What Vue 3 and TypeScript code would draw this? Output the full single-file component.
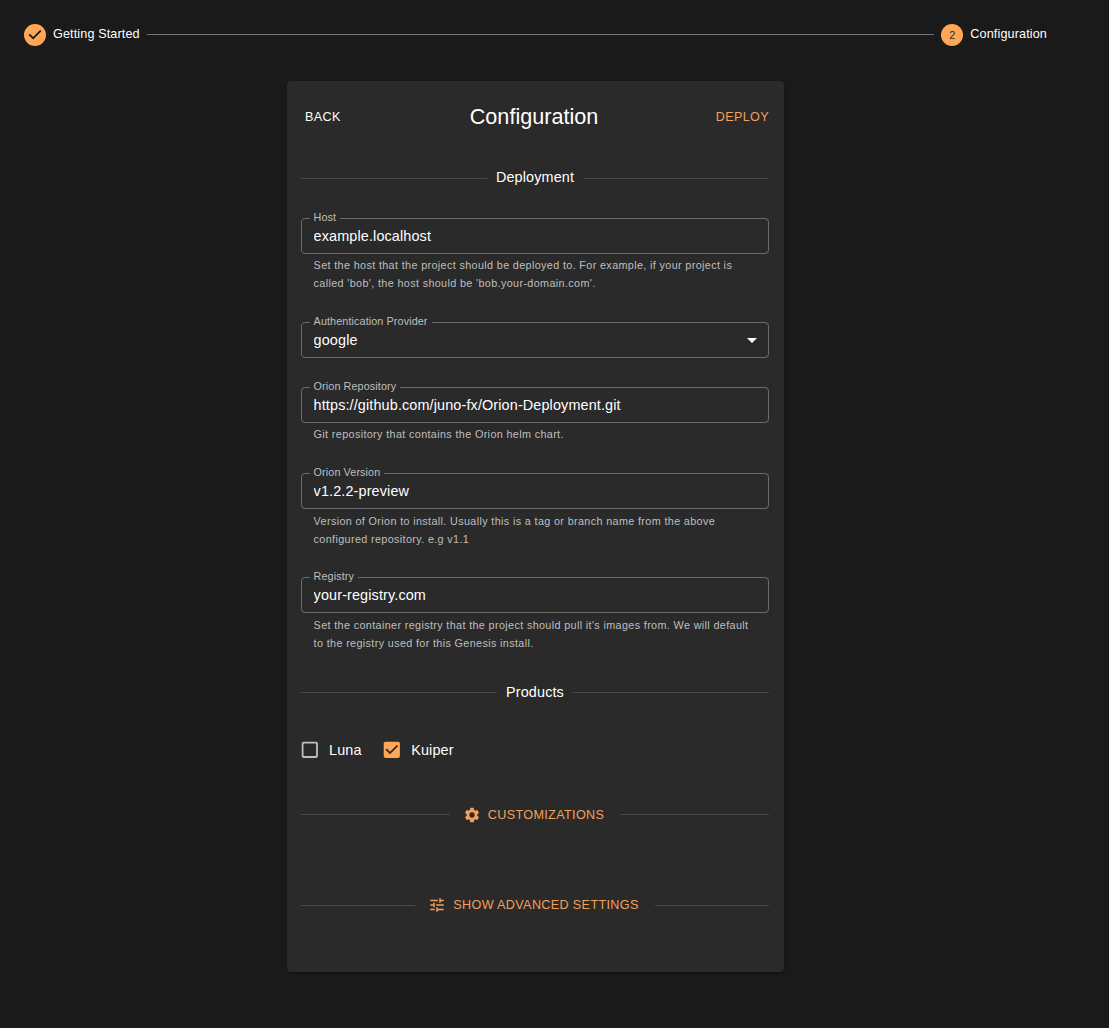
<script setup lang="ts">
interface Field {
  label: string;
  value: string;
  helper?: string;
  select?: boolean;
}

const fields: Field[] = [
  {
    label: 'Host',
    value: 'example.localhost',
    helper: "Set the host that the project should be deployed to. For example, if your project is called 'bob', the host should be 'bob.your-domain.com'."
  },
  { label: 'Authentication Provider', value: 'google', select: true },
  {
    label: 'Orion Repository',
    value: 'https://github.com/juno-fx/Orion-Deployment.git',
    helper: 'Git repository that contains the Orion helm chart.'
  },
  {
    label: 'Orion Version',
    value: 'v1.2.2-preview',
    helper: 'Version of Orion to install. Usually this is a tag or branch name from the above configured repository. e.g v1.1'
  },
  {
    label: 'Registry',
    value: 'your-registry.com',
    helper: "Set the container registry that the project should pull it's images from. We will default to the registry used for this Genesis install."
  }
]

const products = [
  { name: 'Luna', checked: false },
  { name: 'Kuiper', checked: true }
]
</script>

<template>
  <div class="page">
    <div class="stepper">
      <div class="step">
        <svg class="step-done" viewBox="0 0 24 24"><path d="M12 0a12 12 0 1 0 0 24 12 12 0 0 0 0-24zm-2 17l-5-5 1.4-1.4 3.6 3.6 7.6-7.6L19 8l-9 9z" /></svg>
        <span class="step-label">Getting Started</span>
      </div>
      <div class="step-line"></div>
      <div class="step">
        <span class="step-icon">2</span>
        <span class="step-label">Configuration</span>
      </div>
    </div>

    <div class="card">
      <div class="card-head">
        <button class="text-btn back">Back</button>
        <h1 class="title">Configuration</h1>
        <button class="text-btn deploy">Deploy</button>
      </div>

      <div class="divider deployment"><span>Deployment</span></div>

      <div class="fields">
        <div v-for="field in fields" :key="field.label" class="field">
          <div class="input-box">
            <input class="input" :value="field.value" readonly />
            <svg v-if="field.select" class="caret" viewBox="0 0 24 24" width="24" height="24"><path d="M7 10l5 5 5-5z" /></svg>
            <fieldset class="outline">
              <legend><span>{{ field.label }}</span></legend>
            </fieldset>
          </div>
          <p v-if="field.helper" class="helper">{{ field.helper }}</p>
        </div>
      </div>

      <div class="divider products-divider"><span>Products</span></div>

      <div class="products">
        <label v-for="p in products" :key="p.name" class="check">
          <svg v-if="p.checked" class="box on" viewBox="0 0 24 24">
            <path d="M19 3H5c-1.11 0-2 .9-2 2v14c0 1.1.89 2 2 2h14c1.11 0 2-.9 2-2V5c0-1.1-.89-2-2-2zm-9 14-5-5 1.41-1.41L10 14.17l7.59-7.59L19 8l-9 9z" />
          </svg>
          <svg v-else class="box" viewBox="0 0 24 24">
            <path d="M19 5v14H5V5h14m0-2H5c-1.1 0-2 .9-2 2v14c0 1.1.9 2 2 2h14c1.1 0 2-.9 2-2V5c0-1.1-.9-2-2-2z" />
          </svg>
          <span>{{ p.name }}</span>
        </label>
      </div>

      <div class="divider action customizations">
        <button class="text-btn deploy with-icon">
          <svg viewBox="0 0 24 24" width="18" height="18"><path d="M19.14 12.94c.04-.3.06-.61.06-.94 0-.32-.02-.64-.07-.94l2.03-1.58c.18-.14.23-.41.12-.61l-1.92-3.32c-.12-.22-.37-.29-.59-.22l-2.39.96c-.5-.38-1.03-.7-1.62-.94l-.36-2.54c-.04-.24-.24-.41-.48-.41h-3.84c-.24 0-.43.17-.47.41l-.36 2.54c-.59.24-1.13.57-1.62.94l-2.39-.96c-.22-.08-.47 0-.59.22L2.74 8.87c-.12.21-.08.47.12.61l2.03 1.58c-.05.3-.09.63-.09.94s.02.64.07.94l-2.03 1.58c-.18.14-.23.41-.12.61l1.92 3.32c.12.22.37.29.59.22l2.39-.96c.5.38 1.03.7 1.62.94l.36 2.54c.05.24.24.41.48.41h3.84c.24 0 .44-.17.47-.41l.36-2.54c.59-.24 1.13-.56 1.62-.94l2.39.96c.22.08.47 0 .59-.22l1.92-3.32c.12-.22.07-.47-.12-.61l-2.01-1.58zM12 15.6c-1.98 0-3.6-1.62-3.6-3.6s1.62-3.6 3.6-3.6 3.6 1.62 3.6 3.6-1.62 3.6-3.6 3.6z" /></svg>
          Customizations
        </button>
      </div>

      <div class="divider action advanced">
        <button class="text-btn deploy with-icon">
          <svg viewBox="0 0 24 24" width="18" height="18"><path d="M3 17v2h6v-2H3zM3 5v2h10V5H3zm10 16v-2h8v-2h-8v-2h-2v6h2zM7 9v2H3v2h4v2h2V9H7zm14 4v-2H11v2h10zm-6-4h2V7h4V5h-4V3h-2v6z" /></svg>
          Show advanced settings
        </button>
      </div>
    </div>
  </div>
</template>

<style>
body {
  background: #1a1a1a;
}
</style>

<style scoped>
.page {
  min-height: 1028px;
  background: #1a1a1a;
  color: #fff;
  font-family: "Liberation Sans", Arial, sans-serif;
  box-sizing: border-box;
  padding-top: 24px;
}

.stepper {
  display: flex;
  align-items: center;
  height: 21px;
  padding: 0 62px 0 24px;
}

.step {
  display: flex;
  align-items: center;
  gap: 7px;
  font-size: 12.6px;
  letter-spacing: .01071em;
}

.step-label {
  position: relative;
  top: -1px;
}

.step-done {
  width: 22px;
  height: 22px;
  fill: #ffa657;
}

.step-icon {
  width: 22px;
  height: 22px;
  border-radius: 50%;
  background: #ffa657;
  color: #2a2a2a;
  font-size: 10.8px;
  display: flex;
  align-items: center;
  justify-content: center;
}

.step-line {
  flex: 1;
  height: 1px;
  background: #757575;
  margin: 0 7px;
}

.card {
  width: 497px;
  height: 891px;
  margin: 36px 0 0 287px;
  box-sizing: border-box;
  padding: 0 15px 0 14px;
  background: #2a2a2a;
  border-radius: 4px;
  box-shadow: 0 2px 1px -1px rgba(0, 0, 0, .2), 0 1px 1px rgba(0, 0, 0, .14), 0 1px 3px rgba(0, 0, 0, .12);
}

.card-head {
  height: 72px;
  display: grid;
  grid-template-columns: 1fr auto 1fr;
  align-items: center;
}

.title {
  margin: 0 2px 0 0;
  font-size: 21.6px;
  font-weight: 400;
}

.text-btn {
  background: none;
  border: 0;
  padding: 0;
  font: inherit;
  font-size: 12.6px;
  letter-spacing: .02857em;
  text-transform: uppercase;
  color: #fff;
}

.back {
  margin-left: 4px;
  justify-self: start;
}

.deploy {
  color: #f2a05a;
}

.card-head .deploy {
  justify-self: end;
}

.with-icon {
  display: flex;
  align-items: center;
  gap: 7px;
  padding-right: 3px;
}

.with-icon svg {
  fill: #f2a05a;
}

.divider {
  display: flex;
  align-items: center;
  gap: 9px;
  font-size: 14.4px;
  letter-spacing: .00938em;
}

.divider::before,
.divider::after {
  content: "";
  flex: 1;
  height: 1px;
  background: #484848;
}

.deployment {
  margin-top: 15px;
  height: 20px;
}

.deployment span {
  position: relative;
  top: -1px;
}

.fields {
  margin-top: 30px;
  display: flex;
  flex-direction: column;
  gap: 29px;
}

.input-box {
  position: relative;
  height: 36px;
}

.input {
  width: 100%;
  height: 100%;
  box-sizing: border-box;
  padding: 0 12.6px;
  background: none;
  border: 0;
  outline: 0;
  color: #fff;
  font: inherit;
  font-size: 14.4px;
  letter-spacing: .00938em;
}

.caret {
  position: absolute;
  right: 5px;
  top: 6px;
  fill: #fff;
}

.outline {
  position: absolute;
  inset: -5px 0 0;
  margin: 0;
  padding: 0 7.6px;
  border: 1px solid #6b6b6b;
  border-radius: 4px;
  pointer-events: none;
}

.outline legend {
  padding: 0;
  font-size: 10.8px;
  line-height: 11px;
  height: 11px;
  letter-spacing: .00938em;
  color: #bfbfbf;
}

.outline legend span {
  padding: 0 4px;
  position: relative;
  top: -1px;
}

.helper {
  margin: 3px 12.6px 0;
  font-size: 10.8px;
  line-height: 18px;
  letter-spacing: .03333em;
  color: #bfbfbf;
}

.field:nth-child(-n + 3) .helper {
  position: relative;
  top: -1px;
}

.products-divider {
  margin-top: 30px;
  height: 20px;
}

.products {
  margin-top: 36px;
  display: flex;
  gap: 21.5px;
  height: 24px;
}

.check {
  display: flex;
  align-items: center;
  gap: 8.5px;
  font-size: 14.4px;
  letter-spacing: .00938em;
}

.box {
  width: 21.6px;
  height: 21.6px;
  margin-left: -2px;
  fill: #bfbfbf;
}

.box.on {
  fill: #ffa657;
}

.action {
  gap: 13px;
  height: 20px;
}

.customizations {
  margin-top: 42px;
}

.customizations .with-icon {
  position: relative;
  top: 1px;
}

.advanced {
  margin-top: 71px;
}
</style>
